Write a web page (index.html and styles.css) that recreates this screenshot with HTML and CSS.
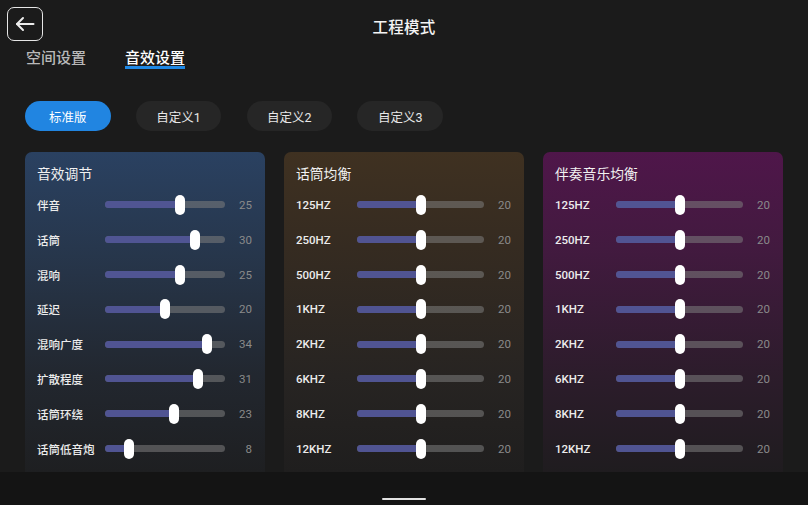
FILE: index.html
```html
<!DOCTYPE html>
<html lang="zh">
<head>
<meta charset="utf-8">
<title>工程模式</title>
<link rel="stylesheet" href="styles.css">
</head>
<body>
<div class="screen">
  <header class="topbar">
    <button class="back" aria-label="返回">
      <svg width="20" height="16" viewBox="0 0 20 16" fill="none" stroke="#ececec" stroke-width="2" stroke-linecap="round" stroke-linejoin="round"><path d="M18.5 8H2"/><path d="M8 2L2 8l6 6"/></svg>
    </button>
    <h1 class="title">工程模式</h1>
    <span></span>
  </header>

  <nav class="tabs">
    <span class="tab">空间设置</span>
    <span class="tab active">音效设置</span>
  </nav>

  <div class="presets">
    <span class="preset active">标准版</span>
    <span class="preset">自定义1</span>
    <span class="preset">自定义2</span>
    <span class="preset">自定义3</span>
  </div>

  <main class="cards">
    <section class="card card-blue">
      <h2 class="card-title">音效调节</h2>
      <div class="rows wide">
        <div class="row"><span class="label">伴音</span><div class="slider"><div class="fill" style="width:62.5%"></div><div class="thumb" style="left:62.5%"></div></div><span class="value">25</span></div>
        <div class="row"><span class="label">话筒</span><div class="slider"><div class="fill" style="width:75%"></div><div class="thumb" style="left:75%"></div></div><span class="value">30</span></div>
        <div class="row"><span class="label">混响</span><div class="slider"><div class="fill" style="width:62.5%"></div><div class="thumb" style="left:62.5%"></div></div><span class="value">25</span></div>
        <div class="row"><span class="label">延迟</span><div class="slider"><div class="fill" style="width:50%"></div><div class="thumb" style="left:50%"></div></div><span class="value">20</span></div>
        <div class="row"><span class="label">混响广度</span><div class="slider"><div class="fill" style="width:85%"></div><div class="thumb" style="left:85%"></div></div><span class="value">34</span></div>
        <div class="row"><span class="label">扩散程度</span><div class="slider"><div class="fill" style="width:77.5%"></div><div class="thumb" style="left:77.5%"></div></div><span class="value">31</span></div>
        <div class="row"><span class="label">话筒环绕</span><div class="slider"><div class="fill" style="width:57.5%"></div><div class="thumb" style="left:57.5%"></div></div><span class="value">23</span></div>
        <div class="row"><span class="label">话筒低音炮</span><div class="slider"><div class="fill" style="width:20%"></div><div class="thumb" style="left:20%"></div></div><span class="value">8</span></div>
      </div>
    </section>

    <section class="card card-brown">
      <h2 class="card-title">话筒均衡</h2>
      <div class="rows">
        <div class="row"><span class="label">125HZ</span><div class="slider"><div class="fill" style="width:50%"></div><div class="thumb" style="left:50%"></div></div><span class="value">20</span></div>
        <div class="row"><span class="label">250HZ</span><div class="slider"><div class="fill" style="width:50%"></div><div class="thumb" style="left:50%"></div></div><span class="value">20</span></div>
        <div class="row"><span class="label">500HZ</span><div class="slider"><div class="fill" style="width:50%"></div><div class="thumb" style="left:50%"></div></div><span class="value">20</span></div>
        <div class="row"><span class="label">1KHZ</span><div class="slider"><div class="fill" style="width:50%"></div><div class="thumb" style="left:50%"></div></div><span class="value">20</span></div>
        <div class="row"><span class="label">2KHZ</span><div class="slider"><div class="fill" style="width:50%"></div><div class="thumb" style="left:50%"></div></div><span class="value">20</span></div>
        <div class="row"><span class="label">6KHZ</span><div class="slider"><div class="fill" style="width:50%"></div><div class="thumb" style="left:50%"></div></div><span class="value">20</span></div>
        <div class="row"><span class="label">8KHZ</span><div class="slider"><div class="fill" style="width:50%"></div><div class="thumb" style="left:50%"></div></div><span class="value">20</span></div>
        <div class="row"><span class="label">12KHZ</span><div class="slider"><div class="fill" style="width:50%"></div><div class="thumb" style="left:50%"></div></div><span class="value">20</span></div>
      </div>
    </section>

    <section class="card card-purple">
      <h2 class="card-title">伴奏音乐均衡</h2>
      <div class="rows">
        <div class="row"><span class="label">125HZ</span><div class="slider"><div class="fill" style="width:50%"></div><div class="thumb" style="left:50%"></div></div><span class="value">20</span></div>
        <div class="row"><span class="label">250HZ</span><div class="slider"><div class="fill" style="width:50%"></div><div class="thumb" style="left:50%"></div></div><span class="value">20</span></div>
        <div class="row"><span class="label">500HZ</span><div class="slider"><div class="fill" style="width:50%"></div><div class="thumb" style="left:50%"></div></div><span class="value">20</span></div>
        <div class="row"><span class="label">1KHZ</span><div class="slider"><div class="fill" style="width:50%"></div><div class="thumb" style="left:50%"></div></div><span class="value">20</span></div>
        <div class="row"><span class="label">2KHZ</span><div class="slider"><div class="fill" style="width:50%"></div><div class="thumb" style="left:50%"></div></div><span class="value">20</span></div>
        <div class="row"><span class="label">6KHZ</span><div class="slider"><div class="fill" style="width:50%"></div><div class="thumb" style="left:50%"></div></div><span class="value">20</span></div>
        <div class="row"><span class="label">8KHZ</span><div class="slider"><div class="fill" style="width:50%"></div><div class="thumb" style="left:50%"></div></div><span class="value">20</span></div>
        <div class="row"><span class="label">12KHZ</span><div class="slider"><div class="fill" style="width:50%"></div><div class="thumb" style="left:50%"></div></div><span class="value">20</span></div>
      </div>
    </section>
  </main>

  <footer class="navbar"><span class="home-indicator"></span></footer>
</div>
</body>
</html>
```

FILE: styles.css
```css
* { box-sizing: border-box; margin: 0; padding: 0; }

html, body {
  width: 808px;
  height: 505px;
  overflow: hidden;
  background: #1b1b1b;
}

body {
  font-family: Roboto, "Noto Sans CJK SC", sans-serif;
  color: #eeeeee;
}

.screen {
  width: 808px;
  height: 505px;
  display: flex;
  flex-direction: column;
}

/* header */
.topbar {
  height: 46px;
  display: grid;
  grid-template-columns: 1fr auto 1fr;
  align-items: start;
  padding: 7px 7px 0;
}

.back {
  width: 36px;
  height: 34px;
  border: 1.5px solid #e6e6e6;
  border-radius: 7px;
  background: transparent;
  display: flex;
  align-items: center;
  justify-content: center;
}

.title {
  font-size: 15.5px;
  font-weight: 500;
  line-height: 20px;
  color: #f4f4f4;
  padding-top: 11px;
  letter-spacing: 0.2px;
}

/* tabs */
.tabs {
  display: flex;
  gap: 39px;
  padding: 5px 0 0 26px;
}

.tab {
  font-size: 15px;
  font-weight: 500;
  line-height: 15px;
  color: #b9b9b9;
  border-bottom: 3px solid transparent;
}

.tab.active {
  color: #ffffff;
  border-bottom-color: #1e88e5;
}

/* presets */
.presets {
  display: flex;
  gap: 25.3px;
  padding-left: 25px;
  margin-top: 32px;
}

.preset {
  width: 85.5px;
  height: 30px;
  border-radius: 15px;
  background: #262626;
  color: #e8e8e8;
  font-size: 12.5px;
  display: flex;
  align-items: center;
  justify-content: center;
}

.preset.active {
  background: #2185e1;
  color: #ffffff;
}

/* cards */
.cards {
  display: grid;
  grid-template-columns: repeat(3, 240px);
  gap: 19px;
  padding-left: 25px;
  margin-top: 21px;
  height: 320px;
}

.card {
  border-radius: 7px 7px 0 0;
  padding: 12px 13px 0 12px;
}

.card-blue {
  background: linear-gradient(180deg, #2a4161 0%, #27374d 30%, #22272f 70%, #1e1f21 100%);
}

.card-brown {
  background: linear-gradient(180deg, #3f3121 0%, #352b21 30%, #272422 70%, #1f1e1e 100%);
}

.card-purple {
  background: linear-gradient(180deg, #4f164a 0%, #421a3f 30%, #2c1c2b 70%, #1f1c1f 100%);
}

.card-title {
  font-size: 13.8px;
  font-weight: 400;
  line-height: 20px;
  color: #f2f2f2;
  margin-bottom: 3.6px;
}

.rows {
  display: grid;
  grid-template-columns: 61px 1fr 27px;
  grid-auto-rows: 34.8px;
}

.rows.wide {
  grid-template-columns: 68px 1fr 27px;
}

.row {
  display: contents;
}

.label {
  font-size: 11.5px;
  font-weight: 500;
  color: #ececec;
  align-self: center;
  white-space: nowrap;
}

.value {
  font-size: 11.5px;
  color: #8a8a8a;
  text-align: right;
  align-self: center;
}

.slider {
  position: relative;
  align-self: center;
  height: 7px;
  border-radius: 4px;
  background: rgba(125, 125, 125, 0.55);
}

.fill {
  height: 100%;
  border-radius: 4px 0 0 4px;
  background: rgba(80, 84, 150, 0.95);
}

.thumb {
  position: absolute;
  top: 50%;
  width: 10px;
  height: 20px;
  border-radius: 5px;
  background: #ffffff;
  transform: translate(-50%, -50%);
}

/* nav bar */
.navbar {
  flex: 1;
  background: #141414;
  display: flex;
  justify-content: center;
  align-items: flex-end;
  padding-bottom: 5px;
}

.home-indicator {
  width: 44px;
  height: 2px;
  border-radius: 1px;
  background: #e2e2e2;
}
```
